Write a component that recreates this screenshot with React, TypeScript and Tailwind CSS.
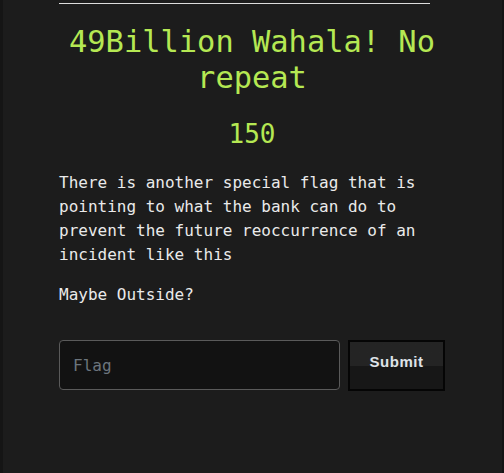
import React from "react";

export default function App() {
  return (
    <div className="flex h-[473px] w-[504px] overflow-hidden bg-[#1c1c1c]">
      <div className="w-[3px] shrink-0 bg-[#151515]" />
      <div className="flex-1">
        <div className="ml-[56px] w-[386px]" style={{ fontFamily: '"DejaVu Sans Mono", monospace' }}>
          <div className="mt-[3px] h-px w-[371px] bg-[#dcdcdc]" />
          <h1 className="mt-[20px] text-center text-[30.4px] leading-[36px] text-[#b5e853]">
            49Billion Wahala! No repeat
          </h1>
          <div className="mt-[23px] text-center text-[26px] leading-[31px] text-[#b5e853]">150</div>
          <p className="mt-[21px] text-[16px] leading-[24px] text-[#eaeaea]">
            There is another special flag that is pointing to what the bank can do to prevent the future
            reoccurrence of an incident like this
          </p>
          <p className="mt-[16px] text-[16px] leading-[24px] text-[#eaeaea]">Maybe Outside?</p>
          <div className="mt-[33px] flex gap-[8px]">
            <input
              placeholder="Flag"
              className="h-[50px] w-[281px] rounded-[4px] border border-[#5a5a5a] bg-[#121212] px-[13px] text-[16px] text-[#eaeaea] outline-none placeholder:text-[#6c757d]"
              style={{ fontFamily: '"DejaVu Sans Mono", monospace' }}
            />
            <button
              className="h-[51px] w-[97px] border-2 border-[#050505] bg-gradient-to-b from-[#242424] from-50% to-[#171717] to-50% pb-[6px] text-[15px] font-bold tracking-[0.5px] text-[#dfe3e8]"
              style={{ fontFamily: '"Liberation Sans", Arial, sans-serif' }}
            >
              Submit
            </button>
          </div>
        </div>
      </div>
      <div className="w-[2px] shrink-0 bg-[#141414]" />
    </div>
  );
}
